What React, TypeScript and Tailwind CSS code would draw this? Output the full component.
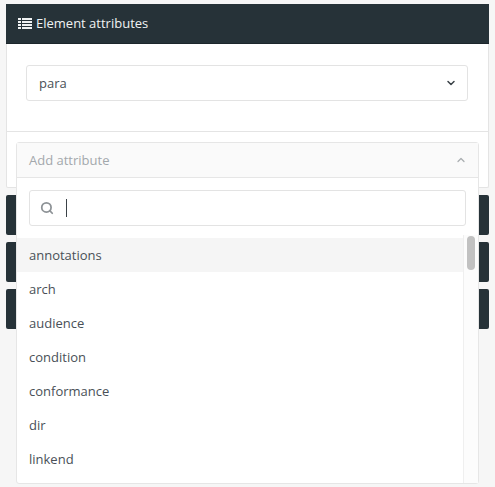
import { ChevronDown, ChevronUp, Search } from 'lucide-react'

const ATTRIBUTES = ['annotations', 'arch', 'audience', 'condition', 'conformance', 'dir', 'linkend']

function CollapsedPanel() {
  return <div className="mt-[7px] h-10 rounded-[2px] bg-[#263238]" />
}

function ListIcon() {
  return (
    <svg width="14" height="11" viewBox="0 0 14 11" fill="currentColor">
      <rect x="0" y="0" width="3" height="2" />
      <rect x="4" y="0" width="10" height="2" />
      <rect x="0" y="3" width="3" height="2" />
      <rect x="4" y="3" width="10" height="2" />
      <rect x="0" y="6" width="3" height="2" />
      <rect x="4" y="6" width="10" height="2" />
      <rect x="0" y="9" width="3" height="2" />
      <rect x="4" y="9" width="10" height="2" />
    </svg>
  )
}

export default function App() {
  return (
    <div
      className="h-[487px] overflow-hidden bg-[#f6f6f6] px-[6px] pt-1 text-[13px] text-[#495057]"
      style={{ fontFamily: '"Open Sans", sans-serif' }}
    >
      <div className="rounded-[2px] border-x border-b border-[#e4e4e4] bg-white">
        <div className="-mx-px flex h-10 items-center gap-1 border-b border-[#1c262b] bg-[#263238] pl-3 text-[#f0f2f3]">
          <ListIcon />
          <span className="pt-px">Element attributes</span>
        </div>

        <div className="pb-[30px] pl-[19px] pr-5 pt-[21px]">
          <div className="flex h-[36px] items-center justify-between rounded-[3px] border border-[#e3e3e3] pl-3 pr-[10px]">
            <span className="pt-px">para</span>
            <ChevronDown size={12} strokeWidth={3} className="text-[#3b4248]" />
          </div>
        </div>

        <div className="border-t border-[#e4e4e4] px-[9px] pb-[9px] pt-[10px]">
          <div className="relative h-[36px]">
            <div className="absolute inset-x-0 top-0 z-10 h-[342px] rounded-[3px] border border-[#e6e6e6] bg-white">
              <div className="flex h-[35px] items-center justify-between border-b border-[#e6e6e6] bg-[#fafafa] pl-3 pr-[11px] text-[#a3a8ac]">
                <span className="pt-px">Add attribute</span>
                <ChevronUp size={12} strokeWidth={2.5} className="text-[#a9adb0]" />
              </div>

              <div className="px-3 pt-3">
                <div className="flex h-[36px] items-center rounded-[3px] border border-[#e3e3e3] pl-[10px]">
                  <Search size={14} strokeWidth={3} className="text-[#8d9296]" />
                  <span className="ml-3 h-[18px] w-px bg-[#3b4248]" />
                </div>
              </div>

              <div className="relative mt-3">
                <div className="mr-[15px]">
                  {ATTRIBUTES.map((name, i) => (
                    <div
                      key={name}
                      className={
                        i === 0
                          ? 'flex h-[34px] items-center bg-[#f5f5f5] pl-3 pt-px'
                          : 'flex h-[34px] items-center pl-3 pt-px'
                      }
                    >
                      {name}
                    </div>
                  ))}
                </div>
                <div className="absolute -top-[3px] right-0 h-[248px] w-[15px] border-l border-[#efefef] bg-[#fcfcfc]">
                  <div className="ml-[3px] mt-[1px] h-[34px] w-2 rounded-[4px] bg-[#c1c1c1]" />
                </div>
              </div>
            </div>
          </div>
        </div>
      </div>

      <CollapsedPanel />
      <CollapsedPanel />
      <CollapsedPanel />
    </div>
  )
}
